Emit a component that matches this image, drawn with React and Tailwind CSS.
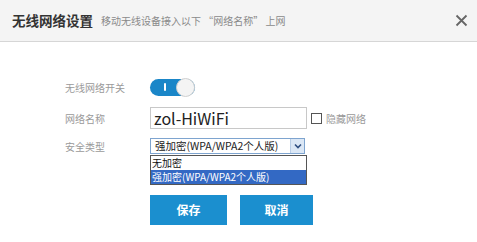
export default function App() {
  const font = { fontFamily: '"Microsoft YaHei","Noto Sans CJK SC",sans-serif' };
  return (
    <div className="w-[477px] h-[242px] bg-white overflow-hidden" style={font}>
      <div className="h-[42px] bg-[#f4f4f4] border-b border-[#d6d6d6] flex items-center pl-[12px] pr-[9px]">
        <span className="text-[13.5px] font-bold text-[#333] leading-none">无线网络设置</span>
        <span className="ml-[8px] text-[10px] text-[#8a8a8a] leading-none whitespace-nowrap">移动无线设备接入以下 “网络名称” 上网</span>
        <svg className="ml-auto" width="13" height="13" viewBox="0 0 13 13">
          <path d="M1.5 1.5 L11.5 11.5 M11.5 1.5 L1.5 11.5" stroke="#666" strokeWidth="1.8" />
        </svg>
      </div>
      <div className="pl-[65px] pt-[36px] flex flex-col">
        <div className="flex items-center h-[18px]">
          <span className="w-[85px] text-[10px] text-[#9a9a9a]">无线网络开关</span>
          <div className="relative w-[45px] h-[17px] rounded-full bg-[#1a86c8] flex items-center">
            <div className="ml-[14px] w-[2px] h-[8px] bg-white rounded" />
            <div className="absolute right-0 top-[-1px] w-[19px] h-[19px] rounded-full bg-[#f4f4f4] border border-[#d0d0d0]" />
          </div>
        </div>
        <div className="flex items-center h-[22px] mt-[11px]">
          <span className="w-[85px] text-[10px] text-[#9a9a9a]">网络名称</span>
          <div className="w-[157px] h-[22px] border border-[#c8c8c8] flex items-center pl-[3px] text-[16px] text-[#222]">zol-HiWiFi</div>
          <div className="ml-[4px] w-[11px] h-[11px] border border-[#555] bg-white" />
          <span className="ml-[4px] text-[10px] text-[#9a9a9a]">隐藏网络</span>
        </div>
        <div className="flex items-center h-[16px] mt-[9px] relative">
          <span className="w-[85px] text-[10px] text-[#9a9a9a]">安全类型</span>
          <div className="relative">
            <div className="w-[155px] h-[16px] border border-[#7ea4cf] flex items-center text-[10.5px] text-[#222] pl-[4px] whitespace-nowrap">
              <span className="leading-none">强加密(WPA/WPA2个人版)</span>
              <div className="ml-auto w-[14px] h-[14px] bg-[#dbe7f5] border-l border-[#b8cde6] flex items-center justify-center">
                <svg width="8" height="6" viewBox="0 0 8 6"><path d="M1 1.5 L4 4.5 L7 1.5" stroke="#2f4e80" strokeWidth="1.6" fill="none" /></svg>
              </div>
            </div>
            <div className="absolute left-0 top-[17px] w-[157px] border border-[#555] bg-white text-[10px] whitespace-nowrap">
              <div className="h-[14px] leading-[14px] pl-[1px] text-[#111]">无加密</div>
              <div className="h-[14px] leading-[14px] pl-[1px] bg-[#3369c4] text-white">强加密(WPA/WPA2个人版)</div>
            </div>
          </div>
        </div>
        <div className="flex mt-[41px] ml-[85px] gap-[13px]">
          <div className="w-[77px] h-[30px] bg-[#1b8fcf] text-white font-bold text-[12px] flex items-center justify-center">保存</div>
          <div className="w-[73px] h-[30px] bg-[#1b8fcf] text-white font-bold text-[12px] flex items-center justify-center">取消</div>
        </div>
      </div>
    </div>
  );
}
